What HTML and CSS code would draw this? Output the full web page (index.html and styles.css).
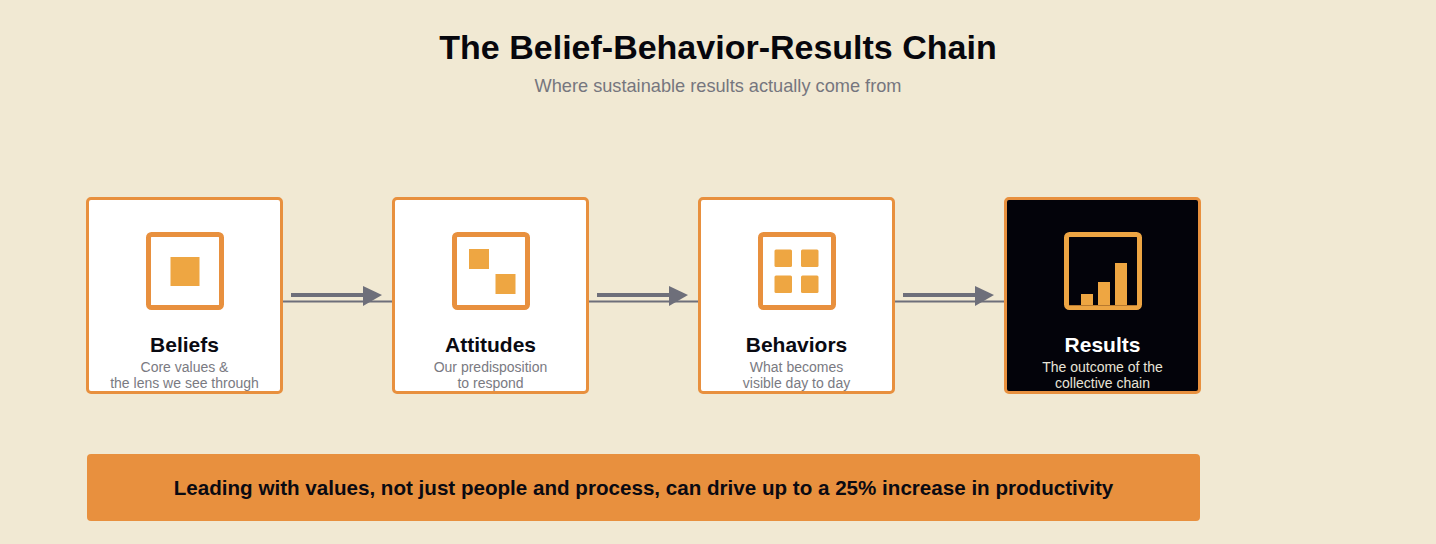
FILE: index.html
```html
<!DOCTYPE html>
<html lang="en">
<head>
<meta charset="utf-8">
<title>The Belief-Behavior-Results Chain</title>
<link rel="stylesheet" href="styles.css">
</head>
<body>
<main class="page">
  <header class="header">
    <h1 class="title">The Belief-Behavior-Results Chain</h1>
    <p class="subtitle">Where sustainable results actually come from</p>
  </header>

  <section class="chain">
    <div class="card">
      <svg class="icon" width="78" height="78" viewBox="0 0 78 78">
        <rect class="icon-frame" x="2.5" y="2.5" width="73" height="73" rx="3"/>
        <rect class="icon-fill" x="24.5" y="25" width="29" height="29"/>
      </svg>
      <h2 class="card-title">Beliefs</h2>
      <p class="card-desc">Core values &amp;<br>the lens we see through</p>
    </div>

    <div class="connector">
      <svg width="109" height="40" viewBox="0 0 109 40">
        <line class="conn-thin" x1="0" y1="26.5" x2="109" y2="26.5"/>
        <line class="conn-shaft" x1="8" y1="20" x2="82" y2="20"/>
        <polygon class="conn-head" points="80,11 99,20 80,31"/>
      </svg>
    </div>

    <div class="card">
      <svg class="icon" width="78" height="78" viewBox="0 0 78 78">
        <rect class="icon-frame" x="2.5" y="2.5" width="73" height="73" rx="3"/>
        <rect class="icon-fill" x="17" y="17" width="20" height="20"/>
        <rect class="icon-fill" x="43.5" y="42" width="20" height="20"/>
      </svg>
      <h2 class="card-title">Attitudes</h2>
      <p class="card-desc">Our predisposition<br>to respond</p>
    </div>

    <div class="connector">
      <svg width="109" height="40" viewBox="0 0 109 40">
        <line class="conn-thin" x1="0" y1="26.5" x2="109" y2="26.5"/>
        <line class="conn-shaft" x1="8" y1="20" x2="82" y2="20"/>
        <polygon class="conn-head" points="80,11 99,20 80,31"/>
      </svg>
    </div>

    <div class="card">
      <svg class="icon" width="78" height="78" viewBox="0 0 78 78">
        <rect class="icon-frame" x="2.5" y="2.5" width="73" height="73" rx="3"/>
        <rect class="icon-fill" x="16.5" y="17.5" width="17.5" height="17.5" rx="1.5"/>
        <rect class="icon-fill" x="43" y="17.5" width="17.5" height="17.5" rx="1.5"/>
        <rect class="icon-fill" x="16.5" y="43.5" width="17.5" height="17.5" rx="1.5"/>
        <rect class="icon-fill" x="43" y="43.5" width="17.5" height="17.5" rx="1.5"/>
      </svg>
      <h2 class="card-title">Behaviors</h2>
      <p class="card-desc">What becomes<br>visible day to day</p>
    </div>

    <div class="connector">
      <svg width="109" height="40" viewBox="0 0 109 40">
        <line class="conn-thin" x1="0" y1="26.5" x2="109" y2="26.5"/>
        <line class="conn-shaft" x1="8" y1="20" x2="82" y2="20"/>
        <polygon class="conn-head" points="80,11 99,20 80,31"/>
      </svg>
    </div>

    <div class="card card-dark">
      <svg class="icon" width="78" height="78" viewBox="0 0 78 78">
        <rect class="icon-frame" x="2.5" y="2.5" width="73" height="73" rx="3"/>
        <rect class="icon-fill" x="17" y="62" width="12" height="12"/>
        <rect class="icon-fill" x="34" y="50" width="12" height="24"/>
        <rect class="icon-fill" x="51" y="31" width="12" height="43"/>
        <line class="icon-base" x1="5" y1="73.5" x2="73" y2="73.5"/>
      </svg>
      <h2 class="card-title">Results</h2>
      <p class="card-desc">The outcome of the<br>collective chain</p>
    </div>
  </section>

  <div class="banner">
    <p class="banner-text">Leading with values, not just people and process, can drive up to a 25% increase in productivity</p>
  </div>
</main>
</body>
</html>
```

FILE: styles.css
```css
* {
  box-sizing: border-box;
}

html, body {
  margin: 0;
  padding: 0;
}

body {
  background: #f1e9d3;
  font-family: "Liberation Sans", Arial, Helvetica, sans-serif;
  color: #0a0a12;
  width: 1436px;
  height: 544px;
  overflow: hidden;
}

.page {
  padding: 27px 86px 0 86px;
}

.header {
  text-align: center;
}

.title {
  margin: 0;
  font-size: 34px;
  line-height: 40px;
  font-weight: 700;
  color: #07070d;
}

.subtitle {
  margin: 8px 0 0 0;
  font-size: 18.2px;
  line-height: 22px;
  color: #76767e;
}

.chain {
  display: flex;
  width: 1115px;
  margin-top: 100px;
}

.card {
  flex: 0 0 197px;
  height: 197px;
  background: #ffffff;
  border: 3px solid #e8903e;
  border-radius: 5px;
  padding-top: 32px;
  display: flex;
  flex-direction: column;
  align-items: center;
  overflow: hidden;
  text-align: center;
}

.card-dark {
  background: #03030a;
}

.icon {
  display: block;
  flex: none;
}

.icon-frame {
  fill: none;
  stroke: #e8903e;
  stroke-width: 5;
}

.card-dark .icon-frame {
  stroke: #eda543;
}

.icon-fill {
  fill: #eea642;
}

.icon-base {
  stroke: #b87a30;
  stroke-width: 1;
}

.card-title {
  margin: 23px 0 0 0;
  font-size: 21px;
  line-height: 24px;
  font-weight: 700;
  color: #0a0a12;
}

.card-dark .card-title {
  color: #ffffff;
}

.card-desc {
  margin: 2px 0 0 0;
  font-size: 14px;
  line-height: 16px;
  color: #7a7a82;
}

.card-dark .card-desc {
  color: #e8e4d8;
}

.connector {
  flex: 0 0 109px;
  padding-top: 78px;
}

.connector svg {
  display: block;
}

.conn-thin {
  stroke: #6e6f7a;
  stroke-width: 2;
}

.conn-shaft {
  stroke: #6e6f7a;
  stroke-width: 4;
}

.conn-head {
  fill: #6e6f7a;
}

.banner {
  width: 1113px;
  height: 67px;
  margin: 60px 0 0 1px;
  background: #e8903e;
  border-radius: 4px;
  display: flex;
  align-items: center;
  justify-content: center;
}

.banner-text {
  margin: 0;
  font-size: 20.6px;
  line-height: 24px;
  font-weight: 700;
  color: #0a0a12;
}
```
